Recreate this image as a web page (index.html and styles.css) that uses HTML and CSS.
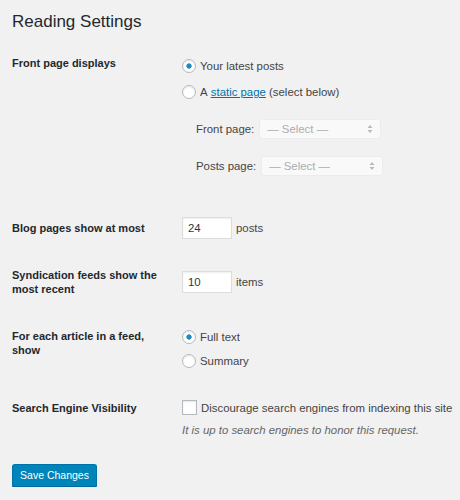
FILE: index.html
```html
<!DOCTYPE html>
<html lang="en">
<head>
<meta charset="utf-8">
<title>Reading Settings</title>
<link rel="stylesheet" href="styles.css">
</head>
<body>
<div class="wrap">
  <h1 class="title">Reading Settings</h1>

  <div class="row row-front">
    <div class="th">Front page displays</div>
    <div class="td">
      <label class="choice"><input type="radio" name="front" class="radio" checked> Your latest posts</label>
      <label class="choice choice-gap"><input type="radio" name="front" class="radio"> A&nbsp;<a href="#" class="link">static page</a>&nbsp;(select below)</label>
      <div class="pick pick-first">
        <span class="pick-label">Front page:</span>
        <div class="select">
          <span>— Select —</span>
          <svg class="arrows" width="6" height="10" viewBox="0 0 6 10"><path d="M3 1 L5.5 4 L0.5 4 Z M3 9 L5.5 6 L0.5 6 Z" fill="#b4b9be"/></svg>
        </div>
      </div>
      <div class="pick pick-second">
        <span class="pick-label">Posts page:</span>
        <div class="select">
          <span>— Select —</span>
          <svg class="arrows" width="6" height="10" viewBox="0 0 6 10"><path d="M3 1 L5.5 4 L0.5 4 Z M3 9 L5.5 6 L0.5 6 Z" fill="#b4b9be"/></svg>
        </div>
      </div>
    </div>
  </div>

  <div class="row row-blog">
    <div class="th th-blog">Blog pages show at most</div>
    <div class="td inline">
      <input type="text" class="num" value="24"> <span>posts</span>
    </div>
  </div>

  <div class="row row-feed">
    <div class="th">Syndication feeds show the most recent</div>
    <div class="td inline td-feed">
      <input type="text" class="num" value="10"> <span>items</span>
    </div>
  </div>

  <div class="row row-article">
    <div class="th th-article">For each article in a feed, show</div>
    <div class="td">
      <label class="choice"><input type="radio" name="article" class="radio" checked> Full text</label>
      <label class="choice choice-gap-sm"><input type="radio" name="article" class="radio"> Summary</label>
    </div>
  </div>

  <div class="row row-search">
    <div class="th th-search">Search Engine Visibility</div>
    <div class="td">
      <label class="choice"><input type="checkbox" class="check"> Discourage search engines from indexing this site</label>
      <p class="desc">It is up to search engines to honor this request.</p>
    </div>
  </div>

  <button type="button" class="button">Save Changes</button>
</div>
</body>
</html>
```

FILE: styles.css
```css
html, body {
  margin: 0;
  padding: 0;
  background: #f1f1f1;
}

body {
  font-family: "Liberation Sans", Arial, Helvetica, sans-serif;
  color: #23282d;
}

.wrap {
  padding: 12px 12px 0 12px;
}

.title {
  margin: 0;
  font-size: 17px;
  line-height: 20px;
  font-weight: 400;
  color: #23282d;
}

.row {
  display: flex;
  align-items: flex-start;
}

.th {
  width: 160px;
  flex: none;
  font-size: 11px;
  line-height: 14px;
  font-weight: 700;
  color: #23282d;
}

.td {
  padding-left: 10px;
  font-size: 11.4px;
  color: #444;
}

.row-front { margin-top: 24px; }
.row-front .td { padding-top: 1px; }

.row-blog { margin-top: 41px; }
.th-blog { padding-top: 4px; }

.row-feed { margin-top: 29px; }
.td-feed { padding-top: 3px; }

.row-article { margin-top: 31px; }
.th-article { padding-top: 2px; }
.row-article .td { padding-top: 1px; }

.row-search { margin-top: 29px; }
.th-search { padding-top: 2px; }

.choice {
  display: flex;
  align-items: center;
  height: 18px;
  line-height: 18px;
  white-space: nowrap;
}

.choice-gap { margin-top: 8px; }
.choice-gap-sm { margin-top: 6px; }

.radio {
  -webkit-appearance: none;
  appearance: none;
  margin: 0 4px 0 0;
  width: 14px;
  height: 14px;
  border: 1px solid #b4b9be;
  border-radius: 50%;
  background: #fff;
  box-shadow: inset 0 1px 2px rgba(0, 0, 0, 0.1);
  flex: none;
}

.radio:checked {
  background: radial-gradient(circle, #1e8cbe 0 2.3px, #fff 3px);
}

.check {
  -webkit-appearance: none;
  appearance: none;
  margin: -2px 4px 0 0;
  width: 15px;
  height: 15px;
  border: 1px solid #b4b9be;
  background: #fff;
  box-shadow: inset 0 1px 2px rgba(0, 0, 0, 0.1);
  flex: none;
}

.link {
  color: #0073aa;
  text-decoration: underline;
}

.pick {
  display: flex;
  align-items: center;
  padding-left: 14px;
  height: 20px;
  line-height: 20px;
}

.pick-first { margin-top: 18px; }
.pick-second { margin-top: 17px; }

.pick-label {
  margin-right: 5px;
}

.select {
  box-sizing: border-box;
  width: 122px;
  height: 20px;
  display: flex;
  align-items: center;
  justify-content: space-between;
  padding: 0 7px 0 7px;
  background: #f9f9f9;
  border: 1px solid #ececec;
  border-radius: 3px;
  color: #a9adb1;
}

.arrows {
  display: block;
}

.inline {
  display: flex;
  align-items: center;
}

.num {
  box-sizing: border-box;
  width: 50px;
  height: 22px;
  margin: 0 4px 0 0;
  padding: 0 5px;
  border: 1px solid #ddd;
  background: #fff;
  box-shadow: inset 0 1px 2px rgba(0, 0, 0, 0.07);
  font-family: "Liberation Sans", Arial, sans-serif;
  font-size: 11.4px;
  color: #32373c;
  outline: none;
}

.desc {
  margin: 5px 0 0 0;
  font-size: 11.4px;
  line-height: 16px;
  font-style: italic;
  color: #666;
}

.button {
  display: block;
  margin-top: 26px;
  box-sizing: border-box;
  width: 85px;
  height: 23px;
  padding: 0;
  background: #0085ba;
  border: 1px solid #0073aa;
  border-bottom-color: #006799;
  border-radius: 3px;
  box-shadow: 0 1px 0 #006799;
  color: #fff;
  font-family: "Liberation Sans", Arial, sans-serif;
  font-size: 10.5px;
  line-height: 21px;
  text-align: center;
  cursor: pointer;
}
```
